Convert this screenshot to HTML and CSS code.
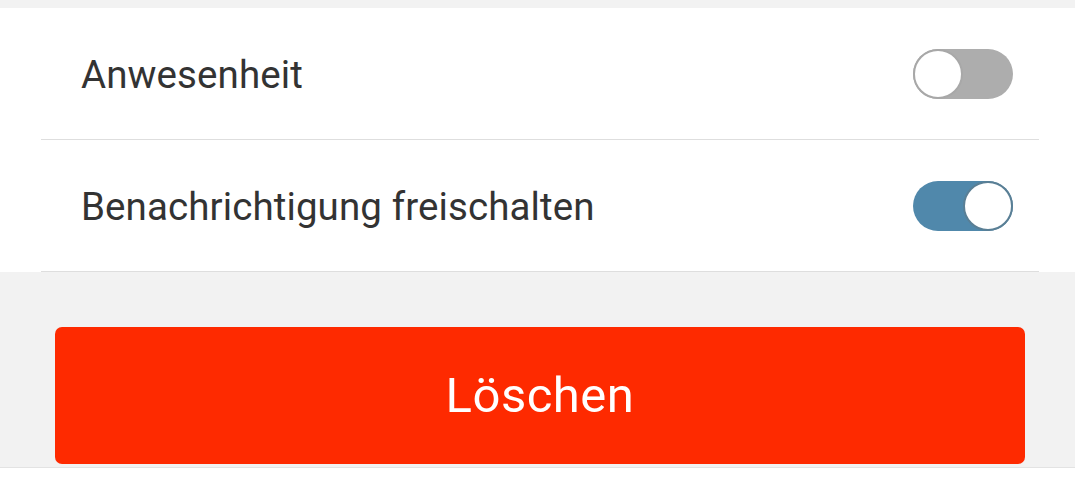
FILE: index.html
```html
<!DOCTYPE html>
<html lang="de">
<head>
<meta charset="utf-8">
<link rel="stylesheet" href="styles.css">
</head>
<body>
<div class="top"></div>
<div class="list">
  <div class="row">
    <span class="label">Anwesenheit</span>
    <span class="toggle off"><span class="knob"></span></span>
  </div>
  <div class="row">
    <span class="label">Benachrichtigung freischalten</span>
    <span class="toggle on"><span class="knob"></span></span>
  </div>
</div>
<div class="actions">
  <button class="delete">Löschen</button>
</div>
<div class="footer"></div>
</body>
</html>
```
FILE: styles.css
```css
html, body {
  margin: 0;
  padding: 0;
}
body {
  background: #f2f2f2;
  font-family: Roboto, "Noto Sans", sans-serif;
  width: 1075px;
  height: 485px;
  overflow: hidden;
  display: flex;
  flex-direction: column;
}
.top {
  height: 8px;
  flex: none;
}
.list {
  background: #ffffff;
  flex: none;
}
.row {
  height: 131px;
  margin: 0 36px 0 41px;
  padding: 0 26px 0 40px;
  border-bottom: 1px solid #dedede;
  display: flex;
  align-items: center;
  justify-content: space-between;
}
.label {
  font-size: 38.5px;
  color: #333333;
  letter-spacing: 0.1px;
  padding-top: 2px;
}
.toggle {
  width: 100px;
  height: 50px;
  border-radius: 25px;
  display: flex;
  align-items: center;
  box-sizing: border-box;
}
.toggle.off {
  background: #adadad;
  justify-content: flex-start;
}
.toggle.on {
  background: #5088ab;
  justify-content: flex-end;
}
.knob {
  width: 50px;
  height: 50px;
  border-radius: 50%;
  background: #ffffff;
  box-sizing: border-box;
}
.toggle.off .knob {
  border: 2px solid #a8a8a8;
}
.toggle.on .knob {
  border: 2px solid #5a7f95;
}
.actions {
  padding: 55px 50px 3px 55px;
  flex: none;
}
.delete {
  display: block;
  width: 100%;
  height: 137px;
  border: none;
  border-radius: 7px;
  background: #fe2a00;
  color: #ffffff;
  font-family: Roboto, "Noto Sans", sans-serif;
  font-size: 49px;
  letter-spacing: 0.5px;
  padding: 0;
}
.footer {
  flex: 1;
  background: #ffffff;
  border-top: 1px solid #e3e3e3;
}
```
